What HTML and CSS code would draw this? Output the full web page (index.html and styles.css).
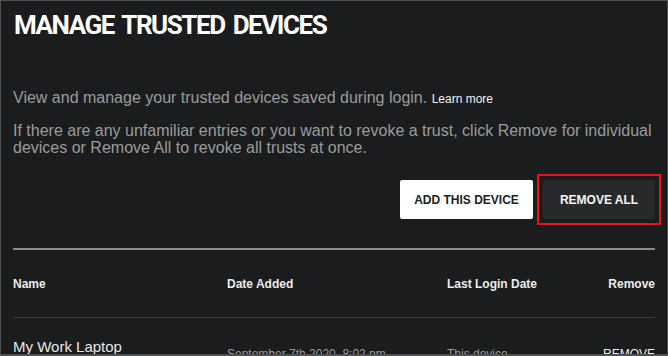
FILE: index.html
```html
<!DOCTYPE html>
<html>
<head>
<meta charset="utf-8">
<link rel="stylesheet" href="styles.css">
</head>
<body>
<div class="frame">
  <h1 class="title">MANAGE TRUSTED DEVICES</h1>
  <p class="desc first">View and manage your trusted devices saved during login. <a class="learn" href="#">Learn more</a></p>
  <p class="desc">If there are any unfamiliar entries or you want to revoke a trust, click Remove for individual devices or Remove All to revoke all trusts at once.</p>
  <div class="actions">
    <button class="btn btn-light">ADD THIS DEVICE</button>
    <span class="highlight"><button class="btn btn-dark">REMOVE ALL</button></span>
  </div>
  <div class="rule"></div>
  <div class="table">
    <div class="row head">
      <div class="c-name">Name</div>
      <div class="c-date">Date Added</div>
      <div class="c-last">Last Login Date</div>
      <div class="c-rem">Remove</div>
    </div>
    <div class="row body">
      <div class="c-name name">My Work Laptop</div>
      <div class="c-date sub">September 7th 2020, 8:02 pm</div>
      <div class="c-last sub">This device</div>
      <div class="c-rem rem">REMOVE</div>
    </div>
  </div>
</div>
</body>
</html>
```

FILE: styles.css
```css
html, body {
  margin: 0;
  padding: 0;
  background: #1b1c1e;
}
.frame {
  box-sizing: border-box;
  width: 668px;
  height: 356px;
  border: 1px solid #4f5052;
  border-bottom-width: 2px;
  background: #1b1c1e;
  overflow: hidden;
  padding: 0 12px 0 12px;
  font-family: "Liberation Sans", Arial, sans-serif;
}
.title {
  margin: 8px 0 0 1px;
  font-family: Roboto, "DejaVu Sans Condensed", sans-serif;
  font-weight: bold;
  font-size: 26px;
  line-height: 32px;
  color: #ffffff;
  letter-spacing: -1.45px;
  word-spacing: 3px;
}
.desc {
  margin: 0;
  font-size: 16px;
  line-height: 17px;
  color: #9b9b9b;
}
.desc.first {
  margin-top: 48px;
  margin-bottom: 14px;
}
.learn {
  color: #f2f2f2;
  font-size: 12px;
  text-decoration: none;
}
.actions {
  display: flex;
  justify-content: flex-end;
  align-items: center;
  gap: 4px;
  margin-top: 18px;
}
.btn {
  font-family: "Liberation Sans", Arial, sans-serif;
  font-weight: bold;
  font-size: 12px;
  height: 39px;
  border: none;
  border-radius: 2px;
  cursor: pointer;
}
.btn-light {
  background: #ffffff;
  color: #222;
  width: 133px;
}
.btn-dark {
  background: #28292b;
  color: #f5f5f5;
  width: 112px;
}
.highlight {
  display: inline-flex;
  padding: 4px;
  border: 2px solid #e8141c;
  margin-right: -6px;
}
.rule {
  height: 2px;
  background: #8c8c8c;
  margin-top: 23px;
}
.row {
  display: grid;
  grid-template-columns: 214px 220px 1fr auto;
}
.row.head {
  height: 67px;
  align-items: center;
  font-weight: bold;
  font-size: 12px;
  color: #ececec;
  border-bottom: 1px solid #3a3b3d;
}
.c-rem {
  text-align: right;
}
.row.body {
  padding-top: 20px;
  align-items: baseline;
}
.name {
  font-size: 15px;
  color: #e6e6e6;
}
.sub {
  font-size: 12px;
  color: #9b9b9b;
  position: relative;
  top: 6px;
}
.rem {
  font-size: 12px;
  color: #ececec;
  position: relative;
  top: 6px;
}
```
